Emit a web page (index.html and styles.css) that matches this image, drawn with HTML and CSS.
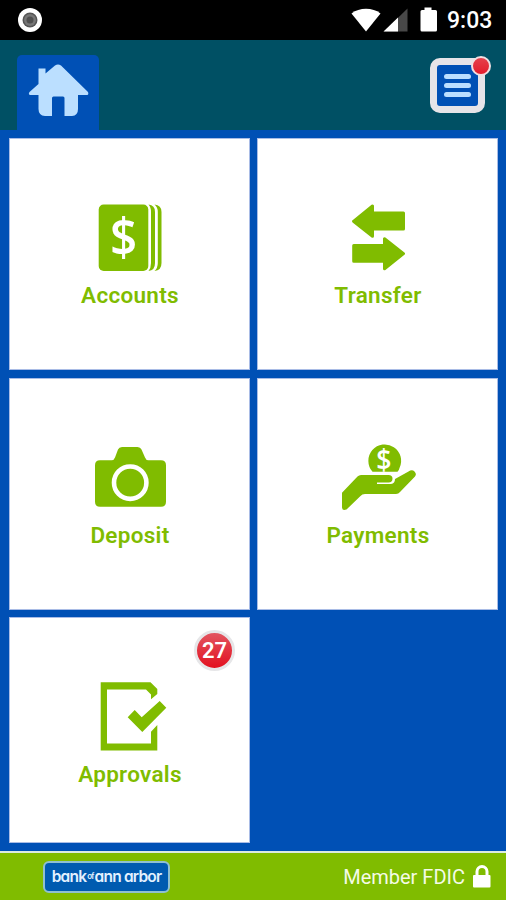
FILE: index.html
```
<!DOCTYPE html>
<html lang="en">
<head>
<meta charset="UTF-8">
<meta name="viewport" content="width=device-width, initial-scale=1.0">
<title>Bank of Ann Arbor</title>
<link rel="stylesheet" href="styles.css">
</head>
<body>
<div class="status-bar">
  <svg class="record" width="26" height="26" viewBox="0 0 26 26">
    <circle cx="13" cy="13" r="12" fill="#fff"/>
    <circle cx="13" cy="13" r="7.500" fill="#555"/>
    <circle cx="13" cy="13" r="6" fill="#777"/>
    <circle cx="13" cy="13" r="3.500" fill="#505050"/>
  </svg>
  <svg class="signals" width="90" height="26" viewBox="0 0 90 26">
    <path d="M1.500 6.500C9.500 .3 22.500 .3 30.500 6.500L16 24.500z" fill="#fff"/>
    <path d="M57.500 1.500v23H34z" fill="#484848"/>
    <path d="M48 10.500v14H33.500z" fill="#fff"/>
    <path d="M74.500 .5h7V3h4a1.500 1.500 0 0 1 1.500 1.500v18.500a1.500 1.500 0 0 1-1.500 1.500h-13.500a1.500 1.500 0 0 1-1.500-1.500V4.500a1.500 1.500 0 0 1 1.500-1.500h2.500z" fill="#fff"/>
  </svg>
  <span class="time">9:03</span>
</div>

<header class="header">
  <a class="home-tab">
    <svg width="62" height="54" viewBox="0 0 62 54">
      <path d="M10.500 20V4.500h7v5L27 1.500Q30 -.5 33 1.500L60 28Q61 31 59 31H50V45Q50 51.500 44 52H36.500V34Q36.500 32.500 35 32.500H25.500Q24 32.500 24 34V52H17Q10.500 51.500 10.500 45V31H2Q0 30.500 1.500 28z" fill="#bbdfff"/>
    </svg>
  </a>
  <button class="menu-button">
    <span class="line"></span>
    <span class="line"></span>
    <span class="line"></span>
    <span class="dot"></span>
  </button>
</header>

<main class="tiles">
  <a class="tile">
    <svg class="icon" viewBox="0 0 80 80">
      <rect x="8.700" y="6.500" width="49.600" height="66.500" rx="5"/>
      <path d="M58.500 6.500Q65 7 65 14V65Q65 72.500 58.500 73Q61 70 61 65V14Q61 9 58.500 6.500z"/>
      <path d="M64.500 6.500Q71.500 7 71.500 14V65Q71.500 72.500 64.500 73Q67.800 70 67.800 65V14Q67.800 9 64.500 6.500z"/>
      <text class="dollar" transform="translate(33.700 58) scale(.9 1)">$</text>
    </svg>
    <span class="label">Accounts</span>
  </a>
  <a class="tile">
    <svg class="icon" viewBox="0 0 80 80">
      <g stroke="#80bc00" stroke-width="3" stroke-linejoin="round">
        <path d="M15.500 23.300L34.500 8V15H65.500V31H34.500V38.200z"/>
        <path d="M65.500 55.700L46.500 40.800V47.500H15.700V63.200H46.500V70.800z"/>
      </g>
    </svg>
    <span class="label">Transfer</span>
  </a>
  <a class="tile">
    <svg class="icon" viewBox="0 0 80 80">
      <path d="M10 22.300H21.500Q24 22.300 25 19.500L28 11.500Q29 9 32 9H47.500Q50.500 9 51.500 11.500L55 19.500Q56 22.300 58.500 22.300H71Q76 22.300 76 27.300V63.700Q76 68.700 71 68.700H10Q5 68.700 5 63.700V27.300Q5 22.300 10 22.300z"/>
      <circle cx="40.200" cy="44.700" r="16.200" fill="none" stroke="#fff" stroke-width="4.600"/>
    </svg>
    <span class="label">Deposit</span>
  </a>
  <a class="tile">
    <svg class="icon" viewBox="0 0 80 80">
      <path d="M34.500 33.700A16.400 16.400 0 1 1 61.500 30Q61 32.500 59.500 33.700z"/>
      <text class="dollar small" transform="translate(46 31.500) scale(.92 1)">$</text>
      <path d="M4 54.700L19.500 38.500Q21 37 23 37H50.500Q54.500 37 54.500 40.700T50.500 44.500H39V46H53Q57 45.500 57 41L70.500 33.500Q74 31 76.500 33.500T77 38.500L62 54Q60.500 56 58 56H27Q24 56 22.500 58L8.500 71.500Q4 73 4 69.500z"/>
    </svg>
    <span class="label">Payments</span>
  </a>
  <a class="tile">
    <svg class="icon" viewBox="0 0 80 80">
      <path d="M10.700 5.300H60.500L67.300 12V17L61 22.300V17.500L56 12.500H17V66.500H61V54.700L67.300 48V73.500H10.700z"/>
      <path d="M37.700 40.300L44.700 33L51.700 40.300L69.700 24L76.300 30.700L52.300 55z"/>
    </svg>
    <span class="label">Approvals</span>
    <span class="badge">27</span>
  </a>
</main>

<footer class="footer">
  <div class="logo">bank<small>of</small>ann arbor</div>
  <div class="member">
    <span>Member FDIC</span>
    <svg width="18" height="24" viewBox="0 0 18 24">
      <path d="M4 11V6.500a5 5 0 0 1 10 0V11" fill="none" stroke="#fff" stroke-width="3"/>
      <rect x="0" y="10" width="17.500" height="12.500" rx="1" fill="#fff"/>
    </svg>
  </div>
</footer>
</body>
</html>
```
FILE: styles.css
```
* {
  box-sizing: border-box;
}
body {
  margin: 0;
  height: 900px;
  display: flex;
  flex-direction: column;
  overflow: hidden;
  font-family: Roboto, sans-serif;
  background-color: #0050b5;
}

/* Status bar */
.status-bar {
  height: 40px;
  display: flex;
  align-items: center;
  padding: 0 13px 0 17px;
  background-color: #000;
}
.signals {
  margin-left: auto;
}
.time {
  width: 46px;
  margin-left: 7px;
  padding-top: 2px;
  font-size: 23px;
  font-weight: 500;
  line-height: 40px;
  color: #fff;
  white-space: nowrap;
}

/* Header */
.header {
  height: 90px;
  display: flex;
  justify-content: space-between;
  align-items: flex-end;
  padding: 0 21px 0 17px;
  background-color: #005064;
}
.home-tab {
  width: 82px;
  height: 75px;
  padding: 9px 0 0 11px;
  border-radius: 5px 5px 0 0;
  background-color: #0050b5;
}
.menu-button {
  position: relative;
  display: flex;
  flex-direction: column;
  justify-content: center;
  align-items: center;
  gap: 4px;
  width: 55px;
  height: 55px;
  margin-bottom: 17px;
  padding: 0;
  border: 7px solid #e6e4e8;
  border-radius: 10px;
  background-color: #0050b5;
}
.menu-button .line {
  width: 27px;
  height: 5px;
  border-radius: 2.5px;
  background-color: #bbdfff;
}
.menu-button .dot {
  position: absolute;
  top: -9px;
  right: -13px;
  width: 20px;
  height: 20px;
  border: 2px solid #f0dfe2;
  border-radius: 50%;
  background: linear-gradient(#e5404c, #e41c2c);
}

/* Tiles */
.tiles {
  flex: 1;
  display: grid;
  grid-template-columns: 1fr 1fr;
  grid-template-rows: 232px 232px 226px;
  gap: 7.5px 7px;
  padding: 8px 8px 0 9px;
}
.tile {
  position: relative;
  display: flex;
  flex-direction: column;
  align-items: center;
  padding-top: 59px;
  border: 1px solid #a9bce6;
  background-color: #fff;
  color: #80bc00;
}
.icon {
  width: 80px;
  height: 80px;
  fill: #80bc00;
}
.dollar {
  fill: #fff;
  font-family: "Open Sans", sans-serif;
  font-size: 53px;
  font-weight: 600;
  text-anchor: middle;
}
.dollar.small {
  font-size: 29px;
}
.label {
  margin-top: 4px;
  padding-left: 1px;
  font-size: 22.5px;
  font-weight: 600;
  line-height: 26px;
  letter-spacing: 0.3px;
}
.badge {
  position: absolute;
  top: 12px;
  right: 14px;
  width: 41px;
  height: 41px;
  border: 3px solid #e6e6e8;
  border-radius: 50%;
  background: linear-gradient(#e25560, #e3101f);
  color: #fff;
  font-size: 22px;
  font-weight: 600;
  line-height: 35px;
  text-align: center;
}

/* Footer */
.footer {
  height: 49px;
  display: flex;
  justify-content: space-between;
  align-items: center;
  padding: 0 15px 0 43px;
  border-top: 2px solid #dcebe0;
  background-color: #80bc00;
}
.logo {
  width: 127px;
  height: 32px;
  border: 2px solid #8fc0d0;
  border-radius: 6px;
  background-color: #005bb0;
  color: #e3f1ff;
  font-family: Inter, sans-serif;
  font-size: 15.5px;
  font-weight: 600;
  letter-spacing: -0.8px;
  line-height: 26px;
  text-align: center;
  white-space: nowrap;
  /* single-storey a */
  font-feature-settings: "cv11";
}
.logo small {
  margin: 0 1px;
  font-size: 8px;
  vertical-align: 3px;
}
.member {
  display: flex;
  align-items: center;
  gap: 8px;
  color: #f4fbe6;
  font-size: 20px;
}
```
